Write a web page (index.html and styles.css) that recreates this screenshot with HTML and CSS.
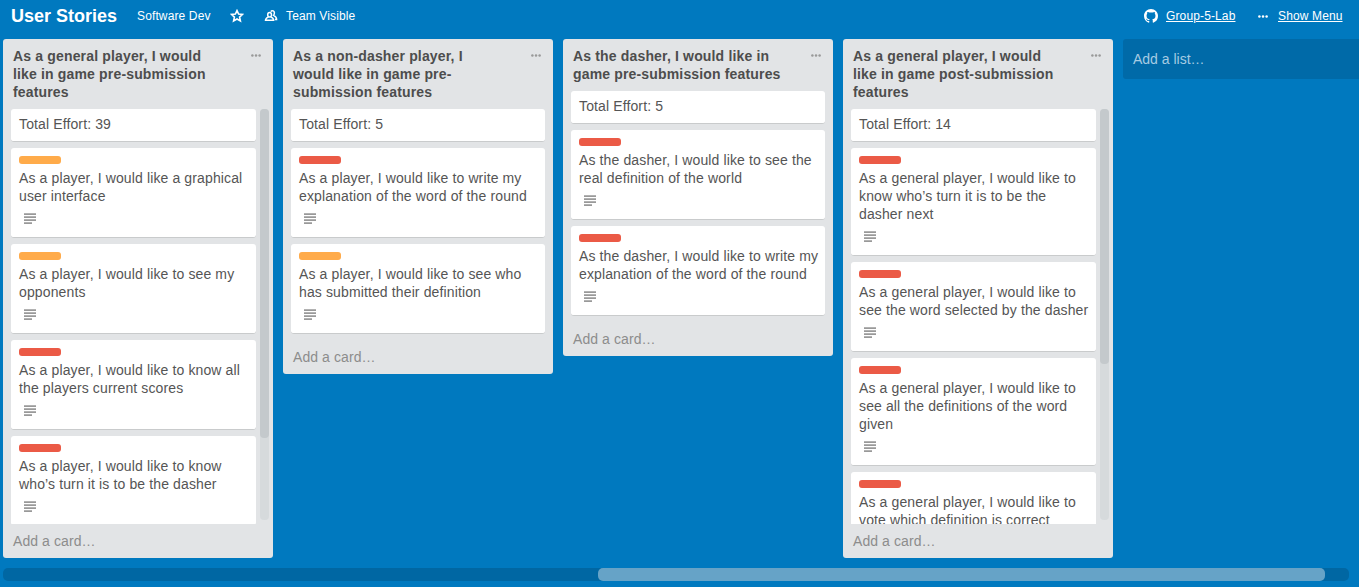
FILE: index.html
```html
<!DOCTYPE html>
<html lang="en">
<head>
<meta charset="utf-8">
<title>User Stories</title>
<link rel="stylesheet" href="styles.css">
</head>
<body>
<svg class="defs" width="0" height="0">
  <symbol id="desc" viewBox="0 0 12 12"><path d="M0 .2h12v1.7H0zM0 3.2h12v1.7H0zM0 6.2h12v1.7H0zM0 9.2h8v1.7H0z"/></symbol>
  <symbol id="dots" viewBox="0 0 10 3"><circle cx="1.4" cy="1.5" r="1.25"/><circle cx="5" cy="1.5" r="1.25"/><circle cx="8.6" cy="1.5" r="1.25"/></symbol>
</svg>
<header class="board-header">
  <h1 class="board-name">User Stories</h1>
  <span class="org">Software Dev</span>
  <svg class="star" viewBox="0 0 14 14"><path d="M7 1.600l1.600 3.500 3.800.4-2.800 2.600.8 3.800L7 10l-3.400 1.900.8-3.800L1.600 5.500l3.800-.4z"/></svg>
  <svg class="people" viewBox="0 0 14 14"><ellipse cx="5.600" cy="5.700" rx="1.900" ry="2.300"/><path d="M4.600 7.900C2.600 8.800 1.500 9.300 1.500 11.300H9.700C9.700 9.300 8.600 8.800 6.600 7.900"/><path d="M6.800 2.700C7.300 1.800 8.400 1.500 9.300 1.900C10.700 2.600 10.700 5 9.600 6.400C11.500 7.300 12.600 8 12.600 10.400H11"/></svg>
  <span class="visibility">Team Visible</span>
  <svg class="github" viewBox="0 0 16 16"><path d="M8 0C3.580 0 0 3.580 0 8c0 3.540 2.290 6.530 5.470 7.590.4.070.550-.170.550-.380 0-.190-.010-.820-.010-1.490-2.010.370-2.530-.490-2.690-.940-.090-.230-.480-.940-.820-1.130-.280-.150-.680-.520-.010-.530.630-.010 1.080.580 1.230.820.720 1.210 1.870.870 2.330.660.070-.520.280-.870.510-1.070-1.780-.2-3.640-.890-3.640-3.950 0-.870.310-1.590.820-2.150-.080-.2-.360-1.020.080-2.120 0 0 .670-.210 2.200.820.640-.180 1.320-.270 2-.270s1.360.090 2 .270c1.530-1.040 2.200-.820 2.200-.820.440 1.100.160 1.920.080 2.120.510.560.820 1.270.820 2.150 0 3.070-1.870 3.750-3.650 3.950.290.250.540.730.540 1.480 0 1.070-.010 1.930-.010 2.200 0 .210.150.460.550.380A8.010 8.010 0 0 0 16 8c0-4.420-3.580-8-8-8z"/></svg>
  <a class="link team-link">Group-5-Lab</a>
  <svg class="menu-dots"><use href="#dots"/></svg>
  <a class="link menu-link">Show Menu</a>
</header>

<main class="board">
  <section class="list full">
    <div class="list-head"><h2>As a general player, I would<br>like in game pre-submission<br>features</h2><svg class="more"><use href="#dots"/></svg></div>
    <div class="list-body">
      <div class="cards">
        <article class="card plain"><p>Total Effort: 39</p></article>
        <article class="card"><i class="label orange"></i><p>As a player, I would like a graphical<br>user interface</p><svg class="desc"><use href="#desc"/></svg></article>
        <article class="card"><i class="label orange"></i><p>As a player, I would like to see my<br>opponents</p><svg class="desc"><use href="#desc"/></svg></article>
        <article class="card"><i class="label red"></i><p>As a player, I would like to know all<br>the players current scores</p><svg class="desc"><use href="#desc"/></svg></article>
        <article class="card"><i class="label red"></i><p>As a player, I would like to know<br>who’s turn it is to be the dasher</p><svg class="desc"><use href="#desc"/></svg></article>
      </div>
      <div class="track"><div class="thumb" style="height:329px"></div></div>
    </div>
    <div class="add-card">Add a card…</div>
  </section>

  <section class="list">
    <div class="list-head"><h2>As a non-dasher player, I<br>would like in game pre-<br>submission features</h2><svg class="more"><use href="#dots"/></svg></div>
    <div class="list-body">
      <div class="cards">
        <article class="card plain"><p>Total Effort: 5</p></article>
        <article class="card"><i class="label red"></i><p>As a player, I would like to write my<br>explanation of the word of the round</p><svg class="desc"><use href="#desc"/></svg></article>
        <article class="card"><i class="label orange"></i><p>As a player, I would like to see who<br>has submitted their definition</p><svg class="desc"><use href="#desc"/></svg></article>
      </div>
    </div>
    <div class="add-card">Add a card…</div>
  </section>

  <section class="list">
    <div class="list-head"><h2>As the dasher, I would like in<br>game pre-submission features</h2><svg class="more"><use href="#dots"/></svg></div>
    <div class="list-body">
      <div class="cards">
        <article class="card plain"><p>Total Effort: 5</p></article>
        <article class="card"><i class="label red"></i><p>As the dasher, I would like to see the<br>real definition of the world</p><svg class="desc"><use href="#desc"/></svg></article>
        <article class="card"><i class="label red"></i><p>As the dasher, I would like to write my<br>explanation of the word of the round</p><svg class="desc"><use href="#desc"/></svg></article>
      </div>
    </div>
    <div class="add-card">Add a card…</div>
  </section>

  <section class="list full">
    <div class="list-head"><h2>As a general player, I would<br>like in game post-submission<br>features</h2><svg class="more"><use href="#dots"/></svg></div>
    <div class="list-body">
      <div class="cards">
        <article class="card plain"><p>Total Effort: 14</p></article>
        <article class="card"><i class="label red"></i><p>As a general player, I would like to<br>know who’s turn it is to be the<br>dasher next</p><svg class="desc"><use href="#desc"/></svg></article>
        <article class="card"><i class="label red"></i><p>As a general player, I would like to<br>see the word selected by the dasher</p><svg class="desc"><use href="#desc"/></svg></article>
        <article class="card"><i class="label red"></i><p>As a general player, I would like to<br>see all the definitions of the word<br>given</p><svg class="desc"><use href="#desc"/></svg></article>
        <article class="card"><i class="label red"></i><p>As a general player, I would like to<br>vote which definition is correct</p></article>
      </div>
      <div class="track"><div class="thumb" style="height:255px"></div></div>
    </div>
    <div class="add-card">Add a card…</div>
  </section>

  <div class="add-list">Add a list…</div>
</main>
<div class="board-scroll"><div class="board-thumb"></div></div>
</body>
</html>
```
FILE: styles.css
```css
* { box-sizing: border-box; }
body {
  margin: 0;
  width: 1359px;
  height: 587px;
  overflow: hidden;
  background: #0079bf;
  color: #4d4d4d;
  font: 14px/18px "Liberation Sans", Arial, sans-serif;
}
.defs { position: absolute; }
h1, h2, p { margin: 0; }
svg { flex: none; display: block; }

.board-header {
  display: flex;
  align-items: center;
  height: 32px;
  padding: 0 16px 0 11px;
  color: #fff;
  fill: #fff;
  font-size: 12px;
  letter-spacing: 0.13px;
  white-space: nowrap;
}
.board-name { width: 126px; font-size: 18px; line-height: 24px; letter-spacing: 0; }
.org { width: 93px; }
.star { width: 14px; height: 14px; fill: none; stroke: #fff; stroke-width: 1.6; }
.people { width: 14px; height: 14px; margin: 0 8px 0 20px; fill: none; stroke: #fff; stroke-width: 1.5; }
.visibility { margin-right: auto; }
.github { width: 14px; height: 14px; margin-right: 8px; }
.link { text-decoration: underline; }
.team-link { width: 70px; }
.menu-link { width: 65px; }
.menu-dots { width: 10px; height: 3px; margin: 0 10px 0 22px; }

.board {
  display: flex;
  align-items: flex-start;
  gap: 10px;
  height: 519px;
  margin: 7px 0 10px 3px;
}
.list {
  flex: none;
  display: flex;
  flex-direction: column;
  width: 270px;
  max-height: 519px;
  background: #e2e4e6;
  border-radius: 3px;
}
.list-head {
  display: flex;
  justify-content: space-between;
  padding: 8px 12px 8px 10px;
  white-space: nowrap;
}
.list-head h2 { font-size: 14px; line-height: 18px; letter-spacing: 0.16px; }
.more { width: 10px; height: 3px; margin-top: 7px; fill: #999; }
.list-body { display: flex; min-height: 0; padding: 0 8px; }
.full .list-body { flex: 1; padding-right: 4px; gap: 4px; }
.cards { flex: 1; min-width: 0; overflow: hidden; }
.card {
  margin-bottom: 6px;
  padding: 8px 0 12px 8px;
  background: #fff;
  border-bottom: 1px solid #c9cbcc;
  border-radius: 3px;
  color: #555;
  letter-spacing: 0.125px;
  white-space: nowrap;
}
.card.plain { padding: 6px 8px 8px; }
.label { display: block; width: 42px; height: 8px; margin-bottom: 5px; border-radius: 3px; }
.orange { background: #ffab4a; }
.red { background: #eb5a46; }
.desc { width: 12px; height: 12px; margin: 8px 0 0 5px; fill: #999; }
.track { width: 9px; height: 411px; border-radius: 4px; background: #d6dadc; }
.thumb { border-radius: 4px; background: #c4c9cc; }
.add-card { padding: 8px 10px; color: #8c8c8c; letter-spacing: 0.08px; }
.add-list {
  flex: 1;
  height: 40px;
  padding: 11px 10px;
  border-radius: 3px 0 0 3px;
  background: #006aa8;
  color: #a6cce3;
}
.board-scroll {
  width: 1346px;
  height: 13px;
  margin-left: 3px;
  padding-left: 595px;
  border-radius: 5px;
  background: #0067a3;
}
.board-thumb { width: 727px; height: 13px; border-radius: 5px; background: #66a3c7; }
```
